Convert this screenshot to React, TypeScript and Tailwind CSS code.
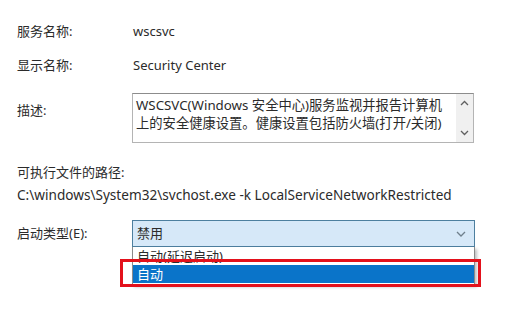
import React from "react";

export default function App() {
  return (
    <div className="w-[524px] h-[319px] bg-white overflow-hidden text-[13px] text-[#2b2b2b] relative" style={{ fontFamily: '"Noto Sans", "Noto Sans CJK SC", sans-serif' }}>
      <div className="flex flex-col pl-[17px]">
        <div className="flex items-center h-[20px] mt-[22px]">
          <div className="w-[116px] shrink-0">服务名称:</div>
          <div>wscsvc</div>
        </div>
        <div className="flex items-center h-[20px] mt-[14px]">
          <div className="w-[116px] shrink-0">显示名称:</div>
          <div>Security Center</div>
        </div>
        <div className="flex items-start mt-[17px]">
          <div className="w-[115px] shrink-0 pt-[8px]">描述:</div>
          <div className="flex w-[342px] h-[50px] border border-[#b4b4b4] border-t-[#8c8c8c]">
            <div className="flex-1 px-[3px] pt-[2px] leading-[18px] text-[13.3px]">
              <div className="whitespace-nowrap">WSCSVC(Windows 安全中心)服务监视并报告计算机</div>
              <div className="whitespace-nowrap">上的安全健康设置。健康设置包括防火墙(打开/关闭)</div>
            </div>
            <div className="w-[17px] bg-[#f0f0f0] flex flex-col items-center justify-between py-[6px] text-[#606060]">
              <svg width="9" height="6" viewBox="0 0 9 6"><path d="M1 5 L4.5 1.5 L8 5" fill="none" stroke="currentColor" strokeWidth="1.3" /></svg>
              <svg width="9" height="6" viewBox="0 0 9 6"><path d="M1 1 L4.5 4.5 L8 1" fill="none" stroke="currentColor" strokeWidth="1.3" /></svg>
            </div>
          </div>
        </div>
        <div className="flex items-center h-[20px] mt-[20px]">可执行文件的路径:</div>
        <div className="flex items-center h-[20px] mt-[2px] whitespace-nowrap text-[13.6px]">C:\windows\System32\svchost.exe -k LocalServiceNetworkRestricted</div>
        <div className="flex items-center mt-[15px]">
          <div className="w-[115px] shrink-0">启动类型(E):</div>
          <div className="relative">
            <div className="flex items-center justify-between w-[343px] h-[27px] bg-[#d6e8f8] border border-[#4d7f9f] pl-[4px] pr-[8px]">
              <span>禁用</span>
              <svg width="10" height="6" viewBox="0 0 10 6" className="text-[#6f7f8c]"><path d="M1 1 L5 5 L9 1" fill="none" stroke="currentColor" strokeWidth="1.3" /></svg>
            </div>
            <div className="absolute left-0 top-[27px] w-[343px] h-[38px] overflow-hidden bg-white border-x border-[#8a8a8a] shadow-[2px_2px_3px_rgba(0,0,0,0.25)]">
              <div className="h-[18px] leading-[18px] pl-[4px]">自动(延迟启动)</div>
              <div className="h-[18px] leading-[18px] pl-[4px] bg-[#0a74c9] text-white">自动</div>
            </div>
          </div>
        </div>
      </div>
      <div className="absolute left-[120px] top-[259px] w-[361px] h-[28px] border-[3px] border-[#e3111b]"></div>
    </div>
  );
}
